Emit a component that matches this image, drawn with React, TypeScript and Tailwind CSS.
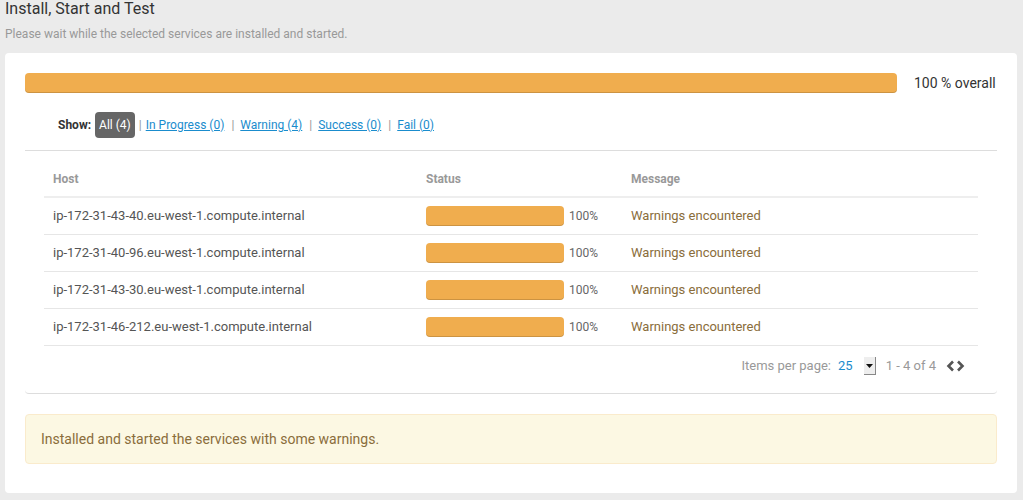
import React from "react";

const hosts = [
  "ip-172-31-43-40.eu-west-1.compute.internal",
  "ip-172-31-40-96.eu-west-1.compute.internal",
  "ip-172-31-43-30.eu-west-1.compute.internal",
  "ip-172-31-46-212.eu-west-1.compute.internal",
];

function Bar({ className }: { className: string }) {
  return (
    <div className={"rounded-[4px] bg-[#f0ad4e] shadow-[inset_0_-1px_0_rgba(0,0,0,0.15)] " + className} />
  );
}

export default function App() {
  return (
    <div className="h-[500px] w-[1023px] bg-[#ebebeb] px-[5px] font-['Roboto',sans-serif] overflow-hidden">
      <div className="h-[26px] pt-[0px] text-[16px] leading-[18px] text-[#333]">Install, Start and Test</div>
      <div className="h-[27px] text-[12px] leading-[16px] text-[#999]">
        Please wait while the selected services are installed and started.
      </div>
      <div className="h-[440px] w-[1012px] rounded-[4px] bg-white px-[20px] pt-[20px]">
        <div className="flex items-center gap-[17px]">
          <Bar className="h-[20px] flex-1" />
          <div className="w-[83px] text-[14px] leading-[20px] text-[#333]">100 % overall</div>
        </div>
        <div className="rounded-b-[4px] border-b border-[#ddd]">
          <div className="flex h-[58px] items-center border-b border-[#ddd] pl-[33px] pt-[6px] text-[12px]">
            <span className="font-bold text-[#333]">Show:</span>
            <span className="ml-[4px] rounded-[4px] bg-[#666] px-[4px] py-[5px] leading-[16px] text-white">All (4)</span>
            <span className="mx-[4px] text-[#999]">|</span>
            <a className="text-[#1a8ccd] underline">In Progress (0)</a>
            <span className="ml-[7px] mr-[6px] text-[#999]">|</span>
            <a className="text-[#1a8ccd] underline">Warning (4)</a>
            <span className="ml-[7px] mr-[6px] text-[#999]">|</span>
            <a className="text-[#1a8ccd] underline">Success (0)</a>
            <span className="ml-[7px] mr-[6px] text-[#999]">|</span>
            <a className="text-[#1a8ccd] underline">Fail (0)</a>
          </div>
          <div className="mx-[19px] mt-[10px]">
            <div className="flex h-[37px] items-center border-b-2 border-[#eee] text-[12px] font-bold text-[#999]">
              <div className="w-[373px] pl-[9px]">Host</div>
              <div className="w-[205px] pl-[9px]">Status</div>
              <div className="flex-1 pl-[9px]">Message</div>
            </div>
            {hosts.map((h) => (
              <div key={h} className="flex h-[37px] items-center border-b border-[#e6e6e6] text-[13px]">
                <div className="w-[373px] pl-[9px] text-[#555]">{h}</div>
                <div className="flex w-[205px] items-center pl-[9px]">
                  <Bar className="h-[20px] w-[138px]" />
                  <span className="ml-[5px] text-[12px] text-[#666]">100%</span>
                </div>
                <div className="flex-1 pl-[9px] text-[#8a6d3b]">Warnings encountered</div>
              </div>
            ))}
            <div className="flex h-[47px] items-start justify-end pr-[12px] pt-[10px] text-[13px] leading-[20px] text-[#999]">
              <span>Items per page:</span>
              <span className="ml-[7px] text-[#1a8ccd]">25</span>
              <span className="ml-[11px] mt-[1px] flex h-[18px] w-[12px] items-center justify-center border-r border-b border-[#888] bg-[#eee]">
                <svg width="7" height="4" viewBox="0 0 7 4"><path d="M0 0h7L3.5 4z" fill="#111" /></svg>
              </span>
              <span className="ml-[10px]">1 - 4 of 4</span>
              <span className="ml-[9px] mt-[4px] flex items-center gap-[1px]">
                <svg width="10" height="12" viewBox="0 0 10 12"><path d="M8 1.5L3.5 6 8 10.5" stroke="#555" strokeWidth="2.6" fill="none" /></svg>
                <svg width="10" height="12" viewBox="0 0 10 12"><path d="M2 1.5L6.5 6 2 10.5" stroke="#555" strokeWidth="2.6" fill="none" /></svg>
              </span>
            </div>
          </div>
        </div>
        <div className="mt-[20px] flex h-[50px] items-center rounded-[4px] border border-[#faebcc] bg-[#fcf8e3] px-[15px] text-[14px] text-[#8a6d3b]">
          Installed and started the services with some warnings.
        </div>
      </div>
    </div>
  );
}
